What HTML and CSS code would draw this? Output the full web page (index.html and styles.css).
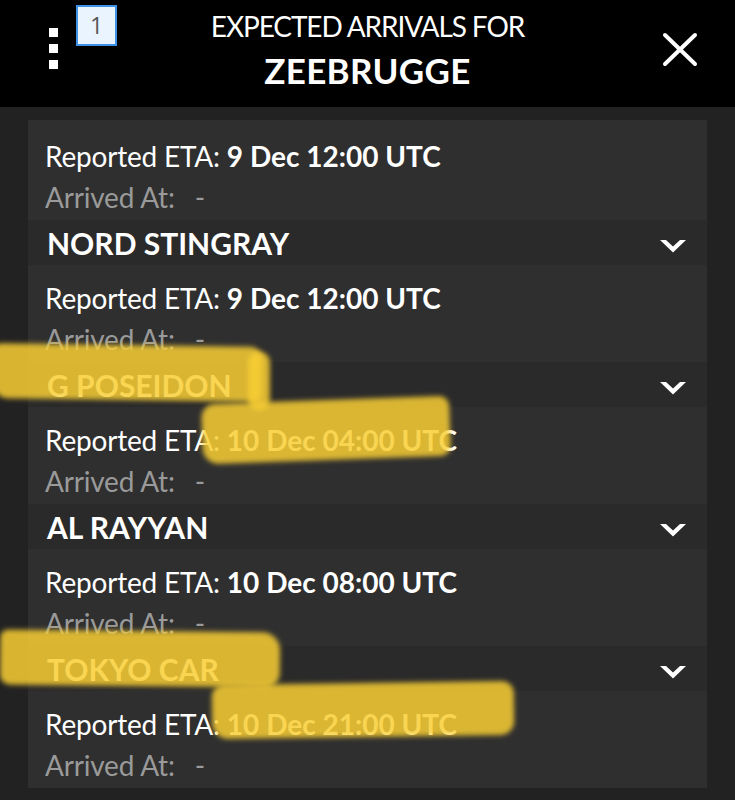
FILE: index.html
```html
<!DOCTYPE html>
<html lang="en">
<head>
  <meta charset="UTF-8">
  <meta name="viewport" content="width=device-width, initial-scale=1.0">
  <title>Expected Arrivals for Zeebrugge</title>
  <link rel="stylesheet" href="styles.css">
</head>
<body>
  <header class="topbar">
    <div class="topbar-left">
      <div class="menu">
        <span></span><span></span><span></span>
      </div>
      <div class="badge">1</div>
    </div>
    <div class="title">
      <div class="title-sub">EXPECTED ARRIVALS FOR</div>
      <div class="title-port">ZEEBRUGGE</div>
    </div>
    <div class="topbar-right">
      <svg class="close" width="36" height="35" viewBox="0 0 36 35">
        <path d="M3 3 L33 32 M33 3 L3 32" stroke="#fff" stroke-width="4" stroke-linecap="round" fill="none"/>
      </svg>
    </div>
  </header>

  <main class="list">
    <div class="panel">
      <div class="detail first">
        <div class="line"><span class="label">Reported ETA:</span> <b>9 Dec 12:00 UTC</b></div>
        <div class="line muted"><span class="label">Arrived At:</span>&nbsp; -</div>
      </div>

      <div class="ship">
        <span>NORD STINGRAY</span>
        <svg class="chevron" width="26" height="14" viewBox="0 0 26 14"><path d="M0 1 L6 1 L13 7.5 L20 1 L26 1 L13 13.5 Z" fill="#fff"/></svg>
      </div>
      <div class="detail">
        <div class="line"><span class="label">Reported ETA:</span> <b>9 Dec 12:00 UTC</b></div>
        <div class="line muted"><span class="label">Arrived At:</span>&nbsp; -</div>
      </div>

      <div class="ship">
        <span>G POSEIDON</span>
        <svg class="chevron" width="26" height="14" viewBox="0 0 26 14"><path d="M0 1 L6 1 L13 7.5 L20 1 L26 1 L13 13.5 Z" fill="#fff"/></svg>
      </div>
      <div class="detail">
        <div class="line"><span class="label">Reported ETA:</span> <b>10 Dec 04:00 UTC</b></div>
        <div class="line muted"><span class="label">Arrived At:</span>&nbsp; -</div>
      </div>

      <div class="ship">
        <span>AL RAYYAN</span>
        <svg class="chevron" width="26" height="14" viewBox="0 0 26 14"><path d="M0 1 L6 1 L13 7.5 L20 1 L26 1 L13 13.5 Z" fill="#fff"/></svg>
      </div>
      <div class="detail">
        <div class="line"><span class="label">Reported ETA:</span> <b>10 Dec 08:00 UTC</b></div>
        <div class="line muted"><span class="label">Arrived At:</span>&nbsp; -</div>
      </div>

      <div class="ship">
        <span>TOKYO CAR</span>
        <svg class="chevron" width="26" height="14" viewBox="0 0 26 14"><path d="M0 1 L6 1 L13 7.5 L20 1 L26 1 L13 13.5 Z" fill="#fff"/></svg>
      </div>
      <div class="detail">
        <div class="line"><span class="label">Reported ETA:</span> <b>10 Dec 21:00 UTC</b></div>
        <div class="line muted"><span class="label">Arrived At:</span>&nbsp; -</div>
      </div>
    </div>
  </main>

  <!-- highlighter marks drawn over the screenshot -->
  <div class="marker m1"></div>
  <div class="marker m1-end"></div>
  <div class="marker m2"></div>
  <div class="marker m3"></div>
  <div class="marker m4"></div>
</body>
</html>
```

FILE: styles.css
```css
html, body {
  margin: 0;
  padding: 0;
}
body {
  position: relative;
  height: 800px;
  overflow: hidden;
  background: #222222;
  font-family: Lato, "Open Sans", sans-serif;
  color: #fff;
}

.topbar {
  display: grid;
  grid-template-columns: 1fr auto 1fr;
  height: 107px;
  background: #000;
}
.topbar-left {
  display: flex;
  align-items: flex-start;
  gap: 18px;
  padding-left: 49px;
}
.menu {
  display: flex;
  flex-direction: column;
  gap: 7px;
  margin-top: 28px;
}
.menu span {
  display: block;
  width: 9px;
  height: 9px;
  background: #fff;
}
.badge {
  margin-top: 5px;
  width: 37px;
  height: 37px;
  border: 2px solid #3d91e6;
  background: #eaf4ff;
  color: #555;
  font-family: "Open Sans", sans-serif;
  font-size: 23px;
  line-height: 36px;
  text-align: center;
}
.title {
  text-align: center;
  padding-top: 8px;
}
.title-sub {
  font-size: 28px;
  line-height: 36px;
  letter-spacing: -1.1px;
}
.title-port {
  font-size: 35px;
  font-weight: 700;
  line-height: 52px;
  letter-spacing: 0.3px;
}
.topbar-right {
  display: flex;
  justify-content: flex-end;
  align-items: flex-start;
  padding-right: 37px;
}
.close {
  margin-top: 32px;
}

.list {
  padding: 13px 28px 0 28px;
}
.panel {
  background: #2f2f2f;
  padding-top: 3px;
}
.detail {
  padding: 13px 17px 2px 17px;
}
.line {
  font-size: 28px;
  line-height: 41px;
  letter-spacing: -0.2px;
  white-space: nowrap;
}
.line b {
  font-weight: 700;
  letter-spacing: 0;
}
.muted {
  color: #9a9a9a;
}
.muted .label {
  margin-right: 6px;
}
.ship {
  display: flex;
  justify-content: space-between;
  align-items: center;
  height: 45px;
  padding: 0 21px 0 19px;
  background: #2a2a2a;
  font-size: 30px;
  font-weight: 700;
}
.chevron {
  margin-top: 6px;
}

.marker {
  position: absolute;
  background: rgba(248, 206, 52, 0.85);
  filter: blur(2.5px);
}
.m1 {
  left: -6px;
  top: 345px;
  width: 268px;
  height: 55px;
  border-radius: 6px 12px 6px 14px;
  transform: rotate(0.8deg);
}
.m1-end {
  left: 248px;
  top: 352px;
  width: 22px;
  height: 58px;
  border-radius: 10px;
}
.m2 {
  left: 202px;
  top: 400px;
  width: 248px;
  height: 60px;
  border-radius: 14px 10px 10px 16px;
  transform: rotate(-2deg);
}
.m3 {
  left: 0;
  top: 631px;
  width: 280px;
  height: 55px;
  border-radius: 8px 18px 14px 10px;
  transform: rotate(0.6deg);
}
.m4 {
  left: 212px;
  top: 683px;
  width: 302px;
  height: 54px;
  border-radius: 12px 12px 14px 16px;
  transform: rotate(-0.8deg);
}
```
